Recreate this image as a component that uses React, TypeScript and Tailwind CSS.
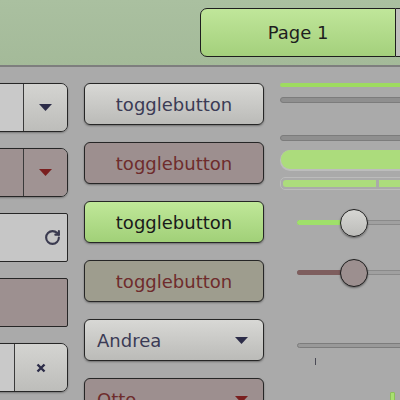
import { RotateCw } from 'lucide-react';

const font = { fontFamily: '"DejaVu Sans", "Noto Sans", sans-serif' };

function Arrow({ color }: { color: string }) {
  return (
    <svg width="13" height="7" viewBox="0 0 13 7">
      <path d="M0 0h13L6.5 7z" fill={color} />
    </svg>
  );
}

function ToggleButton({ tone }: { tone: 'normal' | 'red' | 'green' | 'olive' }) {
  const styles = {
    normal: 'bg-gradient-to-b from-[#d8d8d5] to-[#bbbbb8] text-[#3b3b55]',
    red: 'bg-[#9d8f8f] text-[#6e2c2c]',
    green: 'bg-gradient-to-b from-[#c0e899] to-[#a1d078] text-[#1a1a1a]',
    olive: 'bg-[#9e9d8e] text-[#6e2c2c]',
  };
  return (
    <div
      className={`flex h-[42px] items-center justify-center rounded-[6px] border border-[#262626] text-[18px] shadow-[0_1px_2px_rgba(0,0,0,0.35)] ${styles[tone]}`}
    >
      togglebutton
    </div>
  );
}

function Combo({ label, red }: { label: string; red?: boolean }) {
  return (
    <div
      className={`flex h-[42px] items-center justify-between rounded-[6px] border border-[#262626] pl-[12px] pr-[15px] text-[18px] shadow-[0_1px_2px_rgba(0,0,0,0.35)] ${
        red
          ? 'bg-[#9d8f8f] text-[#6e2c2c]'
          : 'bg-gradient-to-b from-[#d8d8d5] to-[#bbbbb8] text-[#3b3b55]'
      }`}
    >
      <span>{label}</span>
      <Arrow color={red ? '#7a1f1f' : '#2c2c48'} />
    </div>
  );
}

function Slider({ fill, knob }: { fill: string; knob: string }) {
  return (
    <div className="relative ml-[17px] h-[28px] w-[130px]">
      <div className="absolute left-0 right-0 top-[11px] h-[5px] rounded-full border border-[#8a8a8a] bg-[#a0a0a0]" />
      <div className={`absolute left-0 top-[11px] h-[5px] w-[50px] rounded-l-full ${fill}`} />
      <div
        className={`absolute left-[43px] top-0 h-[28px] w-[28px] rounded-full border border-[#1e1e1e] shadow-[0_1px_2px_rgba(0,0,0,0.4)] ${knob}`}
      />
    </div>
  );
}

export default function App() {
  return (
    <div className="h-[400px] w-[400px] overflow-hidden bg-[#aaaaaa]" style={font}>
      <div className="flex h-[67px] border-b-2 border-[#7e7e7e] bg-gradient-to-b from-[#aac0a0] to-[#a4ba99] pl-[200px] pt-[8px]">
        <div className="flex h-[49px] w-[196px] shrink-0 items-center justify-center rounded-l-[7px] border border-[#1e1e1e] bg-gradient-to-b from-[#c0e69a] to-[#a4d07c] text-[18px] text-[#1e1e1e]">
          Page 1
        </div>
        <div className="h-[49px] w-[60px] shrink-0 border-y border-[#1e1e1e] bg-[#bfbfbc]" />
      </div>

      <div className="flex gap-[16px] pt-[16px]">
        <div className="flex w-[68px] shrink-0 flex-col gap-[16px]">
          <div className="-ml-[40px] flex h-[49px] w-[108px] overflow-hidden rounded-[7px] border border-[#262626] shadow-[0_1px_2px_rgba(0,0,0,0.3)]">
            <div className="flex-1 border-r border-[#3a3a3a] bg-[#c9c9c9]" />
            <div className="flex w-[43px] items-center justify-center bg-gradient-to-b from-[#d4d4d1] to-[#bdbdba]">
              <Arrow color="#2c2c48" />
            </div>
          </div>
          <div className="-ml-[40px] flex h-[49px] w-[108px] overflow-hidden rounded-[7px] border border-[#262626] shadow-[0_1px_2px_rgba(0,0,0,0.3)]">
            <div className="flex-1 border-r border-[#3a3a3a] bg-[#9e9191]" />
            <div className="flex w-[43px] items-center justify-center bg-[#a09393]">
              <Arrow color="#7a1f1f" />
            </div>
          </div>
          <div className="-ml-[40px] flex h-[49px] w-[108px] items-center justify-end rounded-[2px] border border-[#262626] bg-[#c6c6c6] pr-[6px] text-[#3b3b50]">
            <RotateCw size={17} strokeWidth={3} />
          </div>
          <div className="-ml-[40px] h-[49px] w-[108px] rounded-[2px] border border-[#262626] bg-[#9d9090]" />
          <div className="-ml-[40px] flex h-[49px] w-[108px] overflow-hidden rounded-[7px] border border-[#262626] shadow-[0_1px_2px_rgba(0,0,0,0.3)]">
            <div className="flex-1 border-r border-[#3a3a3a] bg-[#c9c9c9]" />
            <div className="flex w-[52px] items-center justify-center bg-gradient-to-b from-[#d4d4d1] to-[#bdbdba]">
              <svg width="10" height="10" viewBox="0 0 10 10">
                <path d="M1.5 1.5l7 7M8.5 1.5l-7 7" stroke="#2c2c48" strokeWidth="2.4" />
              </svg>
            </div>
          </div>
        </div>

        <div className="flex w-[180px] shrink-0 flex-col gap-[17px]">
          <ToggleButton tone="normal" />
          <ToggleButton tone="red" />
          <ToggleButton tone="green" />
          <ToggleButton tone="olive" />
          <Combo label="Andrea" />
          <Combo label="Otto" red />
        </div>

        <div className="flex w-[140px] shrink-0 flex-col">
          <div className="h-[4px] rounded-l-full bg-[#9edb60]" />
          <div className="mt-[10px] h-[6px] rounded-l-full border border-[#7c7c7c] bg-[#8f8f8f]" />
          <div className="mt-[32px] h-[6px] rounded-l-full border border-[#7c7c7c] bg-[#8f8f8f]" />
          <div className="mt-[9px] h-[21px] rounded-l-[10px] bg-[#bdbdbd] pb-[2px] pl-[1px]">
            <div className="h-full rounded-l-[9px] bg-[#acdc7c]" />
          </div>
          <div className="mt-[6px] flex h-[13px] gap-[3px] rounded-l-[5px] border border-[#bcbcbc] p-[2px]">
            <div className="w-[93px] rounded-l-[3px] bg-[#acdc7c]" />
            <div className="flex-1 bg-[#acdc7c]" />
          </div>
          <div className="mt-[19px]">
            <Slider fill="bg-[#9fe06a]" knob="bg-gradient-to-b from-[#d6d6d3] to-[#bcbcb9]" />
          </div>
          <div className="mt-[22px]">
            <Slider fill="bg-[#7e5e5e]" knob="bg-[#9c8f8f]" />
          </div>
          <div className="ml-[17px] mt-[56px] h-[5px] rounded-l-full border border-[#7c7c7c] bg-[#999999]" />
          <div className="ml-[35px] mt-[10px] h-[7px] w-[1px] bg-[#4a4a55]" />
          <div className="ml-[110px] mt-[27px] h-[10px] w-[5px] rounded-[1px] border border-[#8cc058] bg-[#a8e070]" />
        </div>
      </div>
    </div>
  );
}
